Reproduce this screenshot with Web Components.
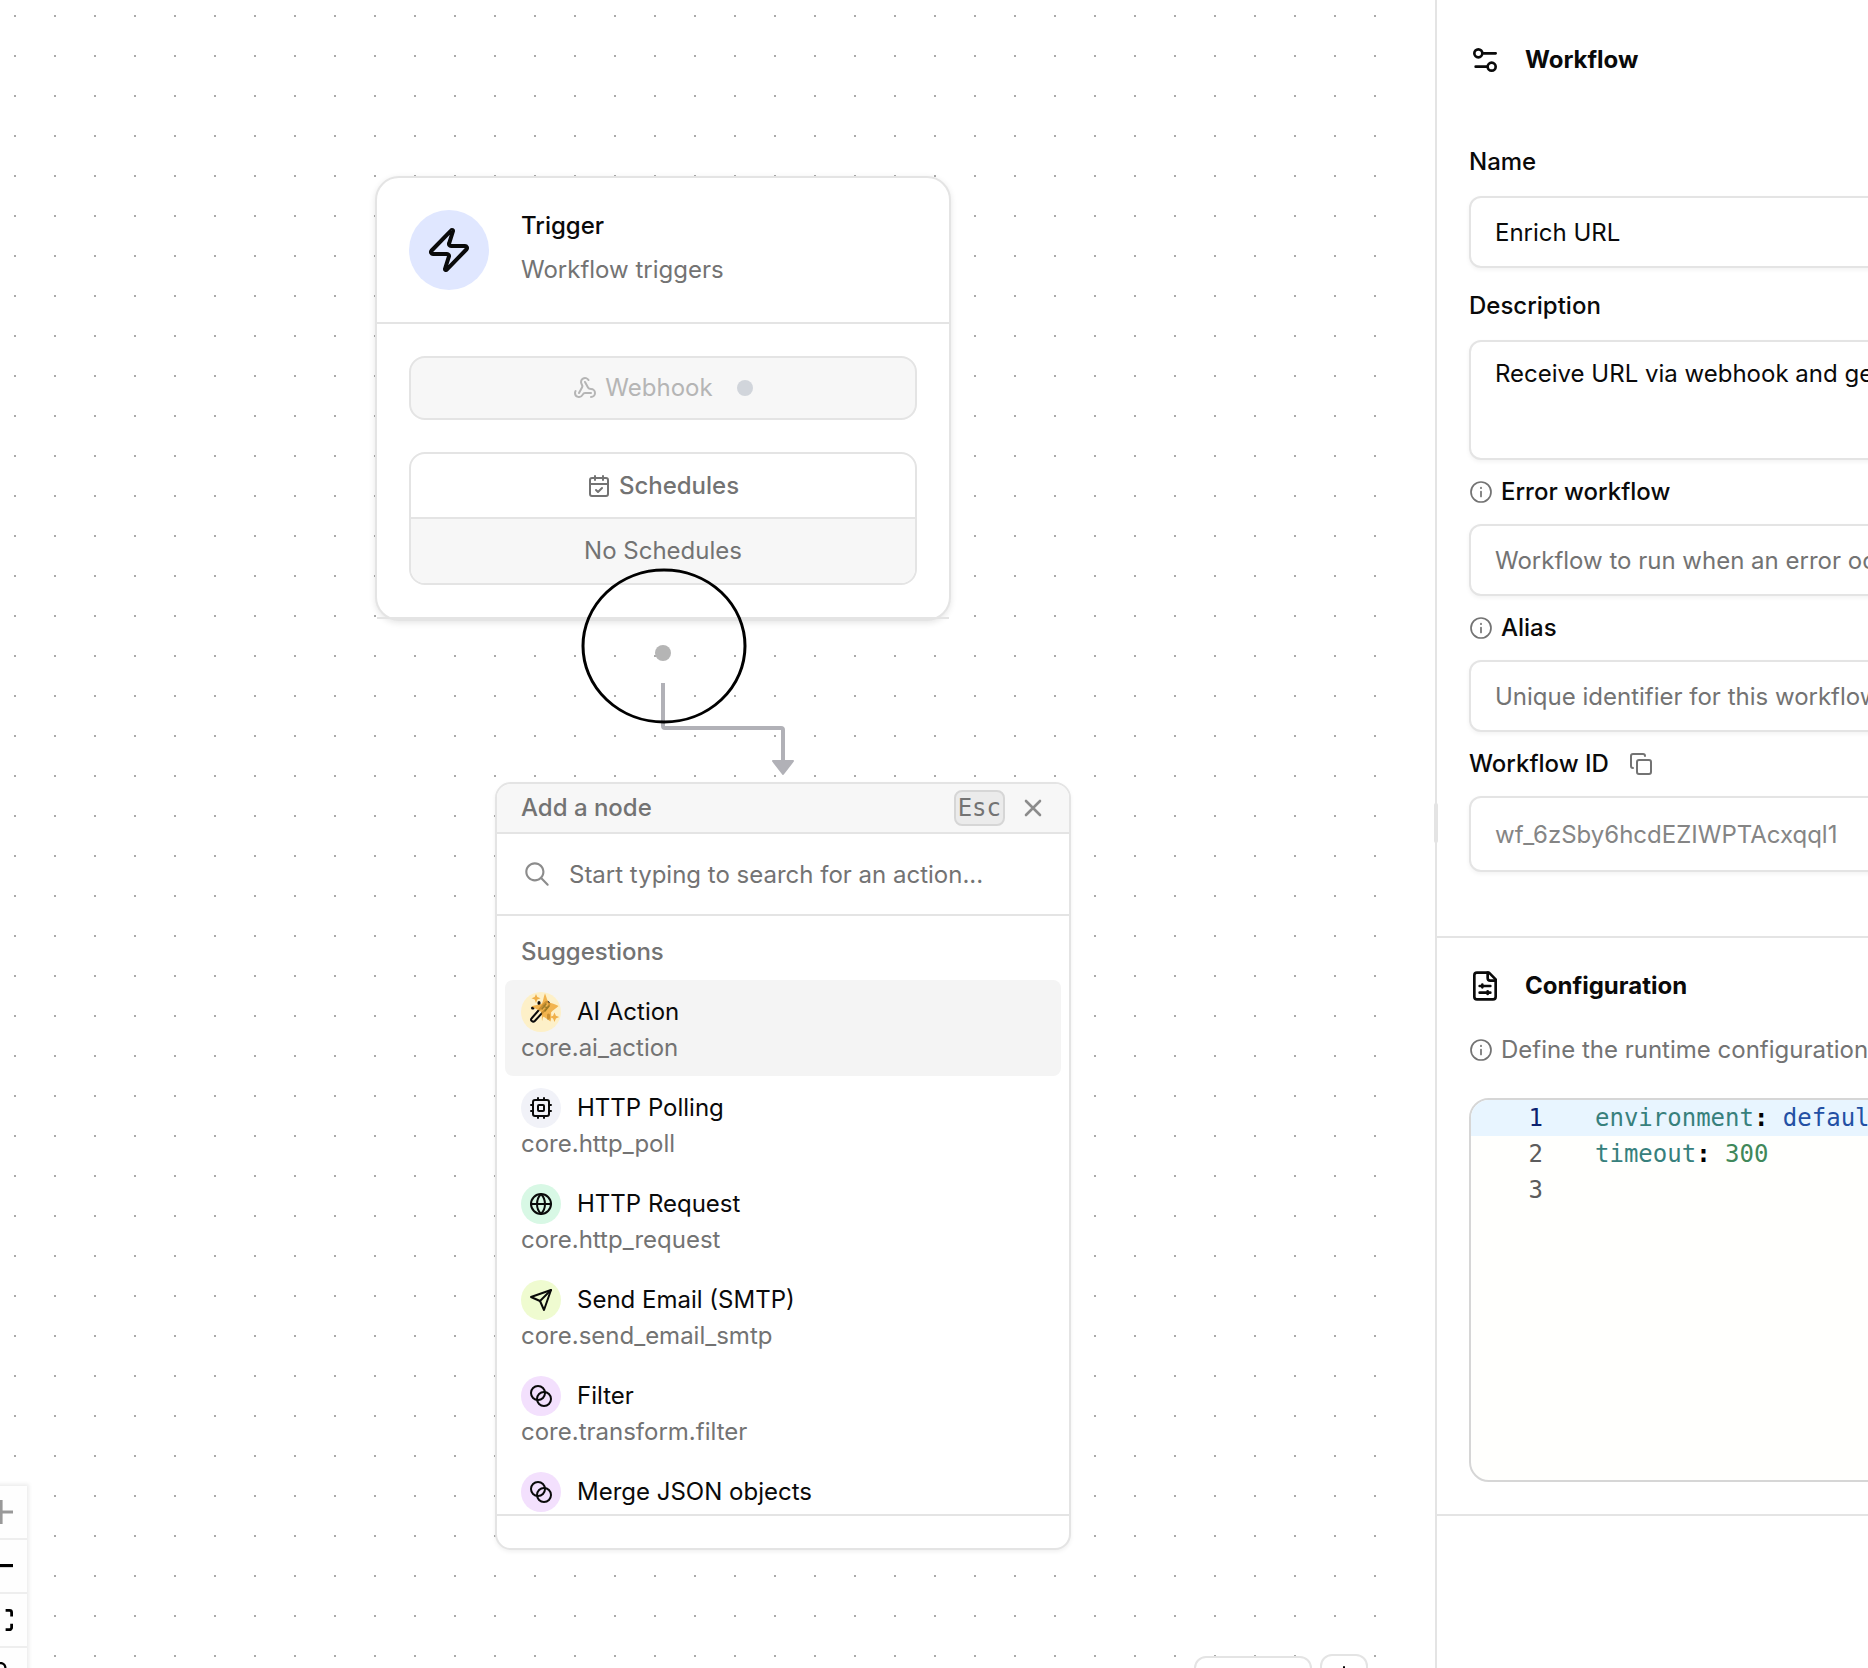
<!DOCTYPE html>
<html lang="en">
<head>
<meta charset="utf-8">
<title>Workflow builder</title>
<style>
  html, body { height: 100%; margin: 0; overflow: hidden; }
  body {
    --line: #e4e4e4;
    --ink: #0a0a0a;
    --muted: #737373;
    --soft: #f7f7f7;
    font: 24px/32px Inter, "Liberation Sans", sans-serif;
    color: var(--ink);
    background: #fff;
  }
</style>
</head>
<body>
<workflow-app></workflow-app>
<script>
const ICONS = {
  zap: '<path d="M4 14a1 1 0 0 1-.78-1.63l9.9-10.2a.5.5 0 0 1 .86.46l-1.92 6.02A1 1 0 0 0 13 10h7a1 1 0 0 1 .78 1.63l-9.9 10.2a.5.5 0 0 1-.86-.46l1.92-6.02A1 1 0 0 0 11 14z"/>',
  webhook: '<path d="M18 16.98h-5.99c-1.1 0-1.95.94-2.48 1.9A4 4 0 0 1 2 17c.01-.7.2-1.4.57-2"/><path d="m6 17 3.13-5.78c.53-.97.1-2.18-.5-3.1a4 4 0 1 1 6.89-4.06"/><path d="m12 6 3.13 5.73C15.66 12.7 16.9 13 18 13a4 4 0 0 1 0 8"/>',
  calendar: '<rect x="3" y="4" width="18" height="18" rx="2"/><path d="M8 2v4M16 2v4M3 10h18M9 16l2 2 4-4"/>',
  info: '<circle cx="12" cy="12" r="10"/><path d="M12 11.5v5M12 7.6v.6"/>',
  copy: '<rect x="8" y="8" width="14" height="14" rx="2"/><path d="M4 16c-1.1 0-2-.9-2-2V4c0-1.1.9-2 2-2h10c1.1 0 2 .9 2 2"/>',
  cpu: '<rect x="4" y="4" width="16" height="16" rx="2"/><rect x="9" y="9" width="6" height="6" rx="1"/><path d="M15 2v2M15 20v2M2 15h2M2 9h2M20 15h2M20 9h2M9 2v2M9 20v2"/>',
  globe: '<circle cx="12" cy="12" r="10"/><path d="M12 2a14.5 14.5 0 0 0 0 20 14.5 14.5 0 0 0 0-20M2 12h20"/>',
  send: '<path d="m22 2-7 20-4-9-9-4Z"/><path d="M22 2 11 13"/>',
  blend: '<circle cx="9" cy="9" r="7"/><circle cx="15" cy="15" r="7"/>',
  sliders: '<path d="M20 7h-9M14 17H5"/><circle cx="17" cy="17" r="3"/><circle cx="7" cy="7" r="3"/>',
  file: '<path d="M15 2H6a2 2 0 0 0-2 2v16a2 2 0 0 0 2 2h12a2 2 0 0 0 2-2V7Z"/><path d="M14 2v4a2 2 0 0 0 2 2h4M8 12h8M10 11v2M8 17h8M14 16v2"/>',
  close: '<path d="M5 5l14 14M19 5L5 19"/>',
  plus: '<path d="M12 1v22M1 12h22"/>',
  search: '<path transform="scale(1.6)" fill="currentColor" fill-rule="evenodd" stroke="none" d="M10 6.5C10 8.433 8.433 10 6.5 10C4.567 10 3 8.433 3 6.5C3 4.567 4.567 3 6.5 3C8.433 3 10 4.567 10 6.5ZM9.309 10.016C8.539 10.632 7.563 11 6.5 11C4.015 11 2 8.985 2 6.5C2 4.015 4.015 2 6.5 2C8.985 2 11 4.015 11 6.5C11 7.563 10.632 8.539 10.016 9.309L12.854 12.146C13.049 12.342 13.049 12.658 12.854 12.854C12.658 13.049 12.342 13.049 12.146 12.854L9.309 10.016Z"/>',
  wand: '<g transform="scale(.6)"><path stroke-width="2" d="M10.5 26.5 24.5 10.5q1.5-1.500 3 0t.3 3.200L13.800 29q-1.500 1.200-3 0t-.3-2.500z"/><path stroke-width="3" d="M18 10.500v1M11.500 16h.5M27.500 23v3"/><path fill="#f0a93a" fill-opacity=".85" stroke="none" d="M24 1.500c1.600 3.500 2 6.500 3.500 9 3 .8 6.500 1.500 10 3.500-2.500 2.500-5.500 4-7.500 6.500.3 3 .5 6-.5 9-2.500-1.500-4.500-3.500-7-4.800-1.500.8-.5 3.500-1.500 4-.5-3.500.5-6-.8-8.700-2.500-2-6-3.500-9.500-5.500 3-1.500 7.500-1.500 10.300-3 1.500-3 1.500-7 3-10z"/><path fill="#f0b04a" stroke="none" d="M15 2l1.300 3 3.200 1.300-3.200 1.300L15 11l-1.300-3.400-3.200-1.300L13.700 5zM33.500 20.500l1.400 3.300 3.300 1.300-3.300 1.300-1.400 3.600-1.400-3.600-3.300-1.300 3.300-1.300z"/><path stroke="#8a7120" stroke-width="1.500" stroke-opacity=".8" d="M21 17l4-5M24 19l4-5M23 14l3 2"/></g>'
};

function define(name, html) {
  const template = document.createElement('template');
  template.innerHTML = '<style>*{box-sizing:border-box}' + html.replace('<style>', '');
  customElements.define(name, class extends HTMLElement {
    constructor() {
      super();
      this.attachShadow({ mode: 'open' }).append(template.content.cloneNode(true));
    }
  });
}

/* <ui-icon name size stroke> draws one line icon */
customElements.define('ui-icon', class extends HTMLElement {
  connectedCallback() {
    if (this.shadowRoot) return;
    const size = this.getAttribute('size') || 24;
    this.attachShadow({ mode: 'open' }).innerHTML =
      `<style>:host{display:block;flex:none;width:${size}px;height:${size}px}svg{display:block;overflow:visible}</style>
       <svg width="${size}" height="${size}" viewBox="0 0 24 24" fill="none" stroke="currentColor" stroke-width="${this.getAttribute('stroke') || 2}" stroke-linecap="round" stroke-linejoin="round" aria-hidden="true">${ICONS[this.getAttribute('name')]}</svg>`;
  }
});

define('trigger-node', `<style>
  :host { display: block; background: #fff; border: 2px solid var(--line); border-radius: 24px; box-shadow: 0 2px 6px rgba(0,0,0,.1); }
  header { display: flex; align-items: center; gap: 32px; padding: 32px; border-bottom: 2px solid var(--line); }
  .badge { display: grid; place-items: center; width: 80px; height: 80px; border-radius: 50%; background: #e0e7ff; }
  .titles { display: grid; gap: 12px; padding-bottom: 4px; }
  h2 { margin: 0; font-size: 24px; font-weight: 500; }
  p { margin: 0; color: var(--muted); }
  .body { display: grid; gap: 32px; padding: 32px; border-bottom: 2px solid var(--line); }
  button { display: flex; justify-content: center; align-items: center; height: 64px; gap: 8px; font: inherit; color: #b5b5b5; background: var(--soft); border: 2px solid var(--line); border-radius: 16px; }
  .dot { width: 16px; height: 16px; margin-left: 16px; border-radius: 50%; background: #d1d5db; }
  section { border: 2px solid var(--line); border-radius: 16px; overflow: hidden; color: var(--muted); }
  h3, .empty { display: flex; justify-content: center; align-items: center; gap: 8px; height: 63px; margin: 0; font-size: 24px; font-weight: 500; }
  .empty { height: 66px; font-weight: 400; background: var(--soft); border-top: 2px solid var(--line); }
</style>
<header><div class="badge"><ui-icon name="zap" size="48"></ui-icon></div>
  <div class="titles"><h2>Trigger</h2><p>Workflow triggers</p></div></header>
<div class="body">
  <button type="button" disabled><ui-icon name="webhook"></ui-icon>Webhook<span class="dot"></span></button>
  <section><h3><ui-icon name="calendar"></ui-icon>Schedules</h3><div class="empty">No Schedules</div></section>
</div>`);

define('action-item', `<style>
  :host { display: block; flex: none; height: 96px; padding: 12px 16px; border-radius: 8px; }
  :host([active]) { background: #f4f4f4; }
  .row { display: flex; align-items: center; gap: 16px; height: 40px; }
  .badge { display: grid; place-items: center; width: 40px; height: 40px; border-radius: 50%; background: var(--tint); }
  .id { color: var(--muted); }
</style>
<div class="row"><span class="badge"><slot name="icon"></slot></span><slot></slot></div>
<div class="id"><slot name="id"></slot></div>`);

define('node-picker', `<style>
  :host { display: block; background: #fff; border: 2px solid var(--line); border-radius: 16px; box-shadow: 0 2px 4px rgba(0,0,0,.06); overflow: hidden; color: var(--muted); }
  header { display: flex; align-items: center; gap: 16px; height: 50px; padding: 0 24px; background: var(--soft); border-bottom: 2px solid var(--line); }
  h2 { flex: 1; margin: 0; font-size: 24px; font-weight: 500; }
  kbd { height: 36px; padding: 0 2px; font: 24px/32px "DejaVu Sans Mono", monospace; background: #ebebeb; border: 2px solid #d6d6d6; border-radius: 8px; }
  button { padding: 0; border: 0; background: none; color: #8c8c8c; }
  label { display: flex; align-items: center; gap: 16px; height: 82px; padding: 0 24px; border-bottom: 2px solid var(--line); color: #8c8c8c; }
  input { flex: 1; min-width: 0; padding: 2px 0 0; border: 0; outline: 0; background: none; font: inherit; color: var(--ink); }
  input::placeholder { color: var(--muted); opacity: 1; }
  .list { display: flex; flex-direction: column; height: 598px; padding: 8px; overflow: hidden; }
  h3 { margin: 0; padding: 12px 16px; font-size: 24px; font-weight: 500; }
  action-item { color: var(--ink); }
  footer { height: 34px; border-top: 2px solid var(--line); }
</style>
<header><h2>Add a node</h2><kbd>Esc</kbd><button type="button" aria-label="Close"><ui-icon name="close" stroke="2.6"></ui-icon></button></header>
<label><ui-icon name="search" size="32"></ui-icon><input type="text" aria-label="Search actions" placeholder="Start typing to search for an action..."></label>
<div class="list">
  <h3>Suggestions</h3>
  <action-item active style="--tint:#fdf0c8"><ui-icon slot="icon" name="wand" size="40"></ui-icon>AI Action<span slot="id">core.ai_action</span></action-item>
  <action-item style="--tint:#f1f2f8"><ui-icon slot="icon" name="cpu"></ui-icon>HTTP Polling<span slot="id">core.http_poll</span></action-item>
  <action-item style="--tint:#d8f8e5"><ui-icon slot="icon" name="globe"></ui-icon>HTTP Request<span slot="id">core.http_request</span></action-item>
  <action-item style="--tint:#effbd0"><ui-icon slot="icon" name="send"></ui-icon>Send Email (SMTP)<span slot="id">core.send_email_smtp</span></action-item>
  <action-item style="--tint:#f3e0fd"><ui-icon slot="icon" name="blend"></ui-icon>Filter<span slot="id">core.transform.filter</span></action-item>
  <action-item style="--tint:#f3e0fd"><ui-icon slot="icon" name="blend"></ui-icon>Merge JSON objects</action-item>
</div>
<footer></footer>`);

define('zoom-controls', `<style>
  :host { display: flex; flex-direction: column; box-shadow: 0 0 4px 2px rgba(0,0,0,.08); }
  button { display: grid; place-items: center; width: 52px; height: 54px; padding: 0; border: 0; border-bottom: 2px solid #eee; background: #fefefe; color: #000; }
  button:disabled { color: #999; }
  svg { width: 24px; max-height: 24px; fill: currentColor; }
</style>
<button type="button" disabled aria-label="Zoom in"><svg viewBox="0 0 32 32"><path d="M32 18.133H18.133V32h-4.266V18.133H0v-4.266h13.867V0h4.266v13.867H32z"/></svg></button>
<button type="button" aria-label="Zoom out"><svg viewBox="0 0 32 5"><path d="M0 0h32v4.200H0z"/></svg></button>
<button type="button" aria-label="Fit view"><svg viewBox="0 0 32 30"><path d="M3.692 4.630c0-.53.4-.938.939-.938h5.215V0H4.708C2.130 0 0 2.054 0 4.630v5.216h3.692V4.631zM27.354 0h-5.200v3.692h5.170c.53 0 .984.4.984.939v5.215H32V4.631A4.624 4.624 0 0027.354 0zm.954 24.830c0 .532-.4.940-.939.940h-5.215v3.768h5.215c2.577 0 4.631-2.130 4.631-4.707v-5.139h-3.692v5.139zm-23.677.940c-.531 0-.939-.4-.939-.940v-5.138H0v5.139c0 2.577 2.130 4.707 4.708 4.707h5.138V25.770H4.631z"/></svg></button>
<button type="button" aria-label="Lock"><svg viewBox="0 0 25 32"><path d="M21.333 10.667H19.810V7.619C19.810 3.429 16.380 0 12.190 0 8 0 4.571 3.429 4.571 7.619v3.048H3.048A3.056 3.056 0 000 13.714v15.238A3.056 3.056 0 003.048 32h18.285a3.056 3.056 0 003.048-3.048V13.714a3.056 3.056 0 00-3.048-3.047zm-4.419 0H7.467V7.619c0-2.590 2.133-4.724 4.723-4.724 2.591 0 4.724 2.133 4.724 4.724v3.048z"/></svg></button>`);

define('flow-canvas', `<style>
  :host { display: block; position: relative; overflow: hidden; }
  .grid, .edges { position: absolute; inset: 0; height: 100%; }
  .grid { width: calc(100% - 32px); }
  .edges { width: 100%; pointer-events: none; }
  trigger-node, node-picker { position: absolute; width: 576px; }
  trigger-node { left: 375px; top: 176px; }
  node-picker { left: 495px; top: 782px; }
  zoom-controls { position: absolute; left: -25px; top: 1486px; }
  .tools { position: absolute; right: 67px; bottom: -34px; display: flex; align-items: center; gap: 8px; }
  .tools button { display: grid; place-items: center; width: 48px; height: 48px; padding: 0; background: #fff; border: 2px solid var(--line); border-radius: 12px; color: #000; }
  .tools .wide { width: 118px; height: 44px; }
</style>
<svg class="grid" aria-hidden="true"><defs><pattern id="dots" x="14" y="15" width="40" height="40" patternUnits="userSpaceOnUse"><rect width="2" height="2" fill="#aaa"/></pattern></defs><rect width="100%" height="100%" fill="url(#dots)"/></svg>
<trigger-node></trigger-node>
<svg class="edges" aria-hidden="true">
  <circle cx="663" cy="653" r="8" fill="#b5b5b5"/>
  <path d="M663 683v43q0 2 2 2h116q2 0 2 2v34" fill="none" stroke="#b1b1b7" stroke-width="4"/>
  <path d="M773 761h20l-10 13z" fill="#b1b1b7" stroke="#b1b1b7" stroke-width="2" stroke-linejoin="round"/>
  <ellipse cx="664" cy="646" rx="81" ry="76" fill="none" stroke="#000" stroke-width="3"/>
</svg>
<node-picker></node-picker>
<zoom-controls></zoom-controls>
<div class="tools"><button class="wide" type="button" aria-label="Run"></button><button type="button" aria-label="Add"><ui-icon name="plus"></ui-icon></button></div>`);

/* A labelled text box: attributes label, value, placeholder, info, copy, multiline, disabled, roomy */
customElements.define('form-field', class extends HTMLElement {
  connectedCallback() {
    if (this.shadowRoot) return;
    const a = n => this.getAttribute(n) || '';
    const control = this.hasAttribute('multiline')
      ? `<textarea id="c">${a('value')}</textarea>`
      : `<input id="c" type="text" value="${a('value')}" placeholder="${a('placeholder')}" ${this.hasAttribute('disabled') ? 'disabled' : ''}>`;
    this.attachShadow({ mode: 'open' }).innerHTML = `<style>
      * { box-sizing: border-box; }
      :host { display: grid; gap: 16px; }
      .head { display: flex; align-items: center; gap: 8px; }
      :host([roomy]) .head { height: 36px; }
      label { font-weight: 500; }
      ui-icon { color: var(--muted); }
      button { margin-left: 12px; padding: 0; border: 0; background: none; }
      input, textarea { display: block; width: 100%; height: 72px; margin: 0; padding: 0 24px; font: inherit; color: var(--ink); background: #fff; border: 2px solid var(--line); border-radius: 12px; box-shadow: 0 2px 4px rgba(0,0,0,.05); outline: 0; }
      textarea { height: 120px; padding: 16px 24px; resize: none; overflow: hidden; }
      input:disabled { height: 76px; color: #858585; }
      ::placeholder { color: var(--muted); opacity: 1; }
    </style>
    <div class="head">${this.hasAttribute('info') ? '<ui-icon name="info" stroke="1.7"></ui-icon>' : ''}<label for="c">${a('label')}</label>${this.hasAttribute('copy') ? '<button type="button" aria-label="Copy"><ui-icon name="copy"></ui-icon></button>' : ''}</div>${control}`;
  }
});

define('panel-section', `<style>
  :host { display: block; border-bottom: 2px solid var(--line); }
  h2 { display: flex; align-items: center; gap: 24px; margin: 0; font-size: 24px; font-weight: 700; }
</style>
<h2><slot name="icon"></slot><slot name="title"></slot></h2><slot></slot>`);

define('code-editor', `<style>
  :host { display: block; height: 384px; background: #fffffd; border: 2px solid #d6d6d6; border-radius: 20px; overflow: hidden; font: 24px/36px "DejaVu Sans Mono", monospace; color: #000; }
  .line { display: flex; gap: 52px; height: 36px; white-space: pre; }
  .line.on { background: #e8f5ff; }
  .n { width: 72px; text-align: right; color: #5c5c5c; }
  .on .n { color: #0b216f; }
  code { font: inherit; }
  b { font-weight: 700; }
  .key { color: #37807c; } .str { color: #2350a4; } .num { color: #40885a; }
</style>
<div class="line on"><span class="n">1</span><code><span class="key">environment</span><b>:</b> <span class="str">default</span></code></div>
<div class="line"><span class="n">2</span><code><span class="key">timeout</span><b>:</b> <span class="num">300</span></code></div>
<div class="line"><span class="n">3</span></div>`);

define('side-panel', `<style>
  :host { display: block; position: relative; border-left: 2px solid var(--line); background: #fff; }
  .grip { position: absolute; left: -3px; top: 803px; width: 4px; height: 40px; border-radius: 2px; background: var(--line); }
  .clip { overflow: hidden; height: 100%; }
  .inner { width: 640px; }
  .workflow { padding: 44px 32px 64px; }
  .config { padding: 32px; }
  form { display: grid; gap: 16px; margin-top: 68px; }
  .first { margin-bottom: 4px; }
  .hint { display: flex; align-items: center; gap: 8px; margin: 32px 0; color: var(--muted); }
</style>
<div class="grip"></div>
<div class="clip"><div class="inner">
  <panel-section class="workflow"><ui-icon slot="icon" name="sliders" size="32"></ui-icon><span slot="title">Workflow</span>
    <form>
      <form-field class="first" roomy label="Name" value="Enrich URL"></form-field>
      <form-field roomy multiline label="Description" value="Receive URL via webhook and get"></form-field>
      <form-field info label="Error workflow" placeholder="Workflow to run when an error occurs"></form-field>
      <form-field info label="Alias" placeholder="Unique identifier for this workflow"></form-field>
      <form-field copy disabled label="Workflow ID" value="wf_6zSby6hcdEZIWPTAcxqql1"></form-field>
    </form>
  </panel-section>
  <panel-section class="config"><ui-icon slot="icon" name="file" size="32"></ui-icon><span slot="title">Configuration</span>
    <p class="hint"><ui-icon name="info" stroke="1.7"></ui-icon>Define the runtime configuration</p>
    <code-editor></code-editor>
  </panel-section>
</div></div>`);

define('workflow-app', `<style>
  :host { display: flex; height: 100vh; overflow: hidden; }
  flow-canvas { flex: 1; min-width: 0; }
  side-panel { flex: none; width: 433px; }
</style>
<flow-canvas></flow-canvas><side-panel></side-panel>`);
</script>
</body>
</html>
